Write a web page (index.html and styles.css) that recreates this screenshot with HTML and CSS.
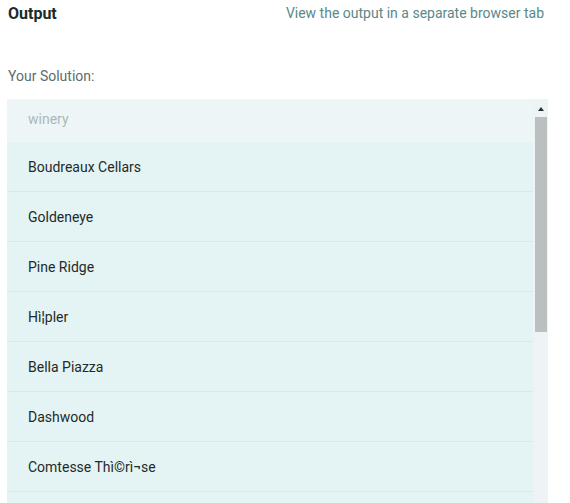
FILE: index.html
```html
<!DOCTYPE html>
<html>
<head>
<meta charset="utf-8">
<link rel="stylesheet" href="styles.css">
</head>
<body>
<div class="page">
  <div class="topbar">
    <h2 class="title">Output</h2>
    <a class="tab-link" href="#">View the output in a separate browser tab</a>
  </div>
  <div class="label">Your Solution:</div>
  <div class="result">
    <div class="table-view">
      <div class="head-row">winery</div>
      <div class="row">Boudreaux Cellars</div>
      <div class="row">Goldeneye</div>
      <div class="row">Pine Ridge</div>
      <div class="row">Hì¦pler</div>
      <div class="row">Bella Piazza</div>
      <div class="row">Dashwood</div>
      <div class="row">Comtesse Thì©rì¬se</div>
    </div>
    <div class="scrollbar">
      <div class="scroll-btn"><span class="arrow"></span></div>
      <div class="thumb"></div>
    </div>
  </div>
</div>
</body>
</html>
```
FILE: styles.css
```css
html, body {
  margin: 0;
  padding: 0;
  background: #ffffff;
  overflow: hidden;
}
.page {
  width: 541px;
  padding: 0 0 0 7px;
  font-family: Roboto, "Liberation Sans", sans-serif;
}
.topbar {
  display: flex;
  justify-content: space-between;
  align-items: center;
  height: 26px;
  padding: 0 4px 0 1px;
}
.title {
  margin: 0;
  font-size: 16px;
  font-weight: 700;
  color: #1c2a2a;
}
.tab-link {
  font-size: 14px;
  color: #5a8888;
  text-decoration: none;
}
.label {
  margin-top: 41px;
  padding-left: 1px;
  font-size: 14px;
  line-height: 18px;
  color: #5e6c6c;
}
.result {
  margin-top: 14px;
  height: 410px;
  display: flex;
  overflow: hidden;
  background: #eef4f6;
}
.table-view {
  flex: 1;
  overflow: hidden;
  background: #e4f4f4;
}
.head-row {
  height: 43px;
  line-height: 40px;
  padding-left: 21px;
  font-size: 14px;
  color: #a9b9b9;
  background: #eef5f7;
}
.row {
  height: 49px;
  line-height: 50px;
  padding-left: 21px;
  font-size: 14px;
  color: #1f2a2a;
  background: #e4f4f4;
  border-bottom: 1px solid #d6eaea;
}
.scrollbar {
  width: 15px;
  display: flex;
  flex-direction: column;
  align-items: center;
  background: #eef3f5;
}
.scroll-btn {
  height: 18px;
  width: 15px;
  display: flex;
  align-items: center;
  justify-content: center;
}
.arrow {
  width: 0;
  height: 0;
  border-left: 3.5px solid transparent;
  border-right: 3.5px solid transparent;
  border-bottom: 4px solid #243434;
  margin-top: 1px;
}
.thumb {
  width: 12px;
  height: 215px;
  background: #bbbfbf;
}
```
